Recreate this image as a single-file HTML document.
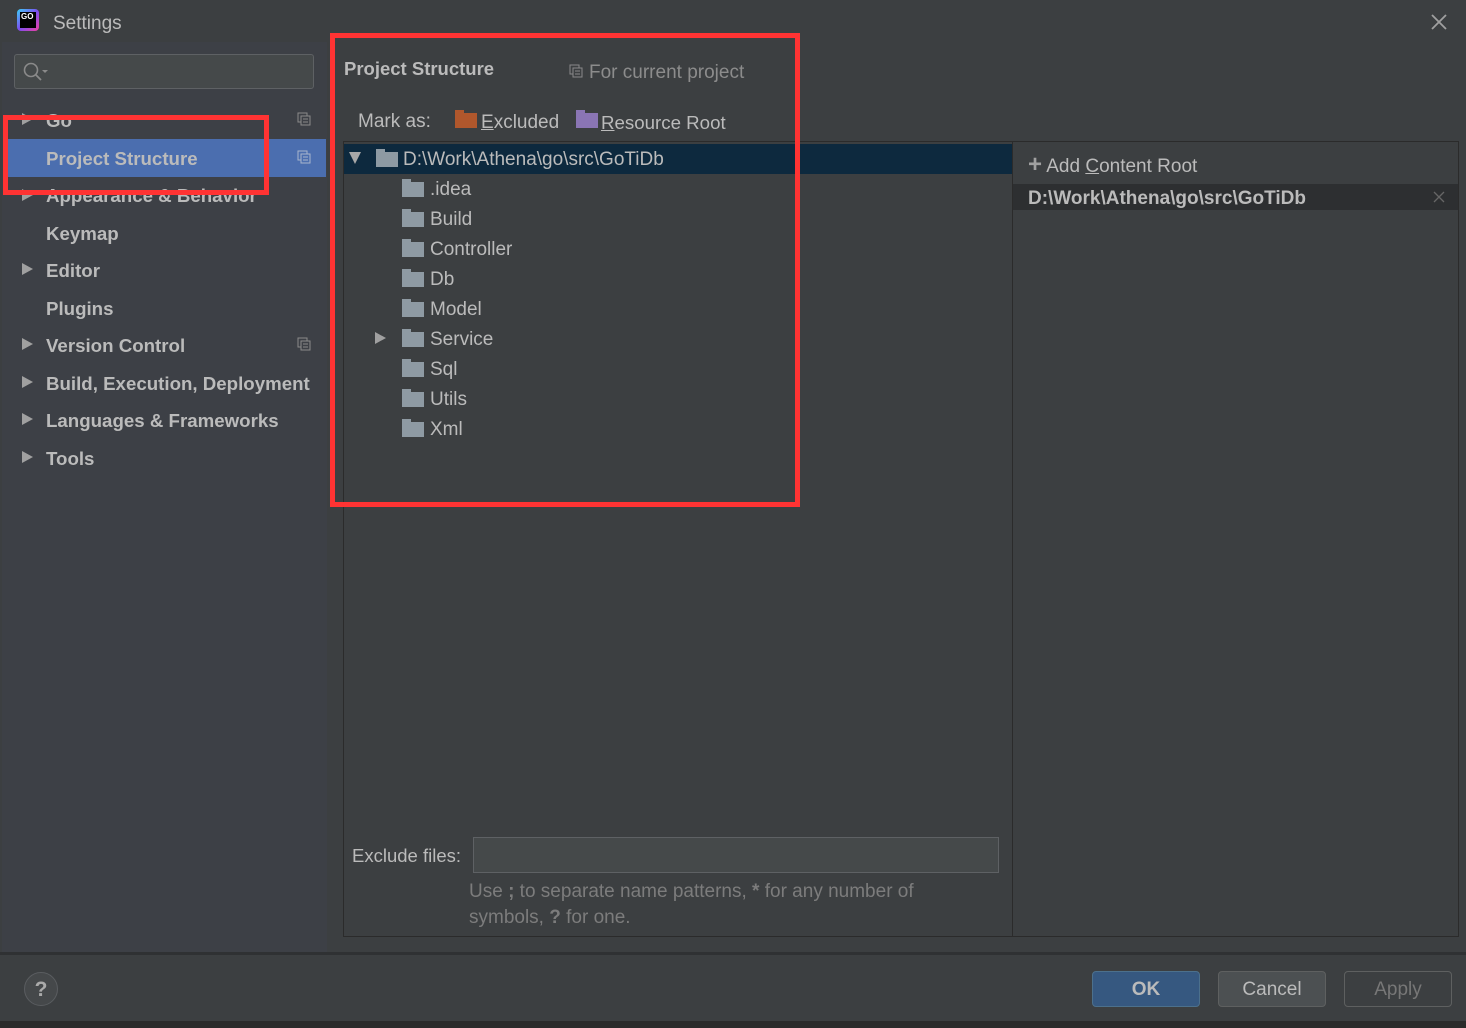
<!DOCTYPE html>
<html><head><meta charset="utf-8"><style>
*{margin:0;padding:0;box-sizing:border-box}
body{width:1466px;height:1028px;background:#3c3f41;font-family:"Liberation Sans",sans-serif;color:#bbbbbb;position:relative;overflow:hidden}
.a{position:absolute;white-space:nowrap}
.t{transform:translateY(2px)}
.side{position:absolute;left:2px;top:42px;width:325px;height:911px;background:#3d4046}
.si{position:absolute;left:46px;font-size:18.7px;font-weight:bold;color:#bbbbbb;transform:translateY(2px);white-space:nowrap}
.tri{position:absolute;left:22px;width:0;height:0;border-left:11px solid #a0a0a0;border-top:6px solid transparent;border-bottom:6px solid transparent}
.cp{position:absolute;left:297px;width:14px;height:14px}
.fold{position:absolute;width:22px;height:15px;background:#8e9aa3}
.fold:before{content:"";position:absolute;left:0;top:-3px;width:9px;height:4px;background:#8e9aa3}
.tn{position:absolute;font-size:19px;color:#bbbbbb;transform:translateY(2px);white-space:nowrap}
.red{position:absolute;border:5px solid #ff3333}
.btn{position:absolute;top:971px;height:36px;border-radius:4px;font-size:19px;text-align:center;line-height:36px}
</style></head><body>
<div class="a" style="left:17px;top:9px;width:22px;height:22px;border-radius:4px;background:linear-gradient(135deg,#3bd1f7,#7b4ef0,#f03fa0)"></div>
<div class="a" style="left:20px;top:12px;width:16px;height:16px;background:#000;color:#fff;font-size:8px;font-weight:bold;line-height:10px;padding-left:1px">GO</div>
<div class="a t" style="left:53px;top:11px;font-size:19px;color:#bbbbbb">Settings</div>
<svg class="a" style="left:1430px;top:13px" width="18" height="18"><path d="M2 2L16 16M16 2L2 16" stroke="#a0a0a0" stroke-width="1.8"/></svg>

<div class="side"></div>
<div class="a" style="left:14px;top:54px;width:300px;height:35px;border:1px solid #5e6164;border-radius:3px;background:#45494a"></div>
<svg class="a" style="left:22px;top:61px" width="28" height="22"><circle cx="9" cy="9" r="6.5" stroke="#8a8a8a" stroke-width="1.6" fill="none"/><path d="M14 14L19 19" stroke="#8a8a8a" stroke-width="1.8"/><path d="M20 9L26 9L23 12Z" fill="#8a8a8a"/></svg>

<div class="tri" style="top:113px"></div><div class="si" style="top:108px">Go</div>
<div class="a" style="left:8px;top:139px;width:318px;height:38px;background:#4b6eaf"></div>
<div class="si" style="top:146px">Project Structure</div>
<div class="tri" style="top:189px"></div><div class="si" style="top:183px">Appearance &amp; Behavior</div>
<div class="si" style="top:221px">Keymap</div>
<div class="tri" style="top:263px"></div><div class="si" style="top:258px">Editor</div>
<div class="si" style="top:296px">Plugins</div>
<div class="tri" style="top:338px"></div><div class="si" style="top:333px">Version Control</div>
<div class="tri" style="top:376px"></div><div class="si" style="top:371px">Build, Execution, Deployment</div>
<div class="tri" style="top:413px"></div><div class="si" style="top:408px">Languages &amp; Frameworks</div>
<div class="tri" style="top:451px"></div><div class="si" style="top:446px">Tools</div>
<svg class="cp" style="top:112px"><rect x="1" y="1" width="9" height="9" fill="none" stroke="#8a8a8a"/><rect x="4" y="4" width="9" height="9" fill="#3d4046" stroke="#8a8a8a"/><path d="M6 7H11M6 10H11" stroke="#8a8a8a"/></svg>
<svg class="cp" style="top:150px"><rect x="1" y="1" width="9" height="9" fill="none" stroke="#a8b5cc"/><rect x="4" y="4" width="9" height="9" fill="#4b6eaf" stroke="#a8b5cc"/><path d="M6 7H11M6 10H11" stroke="#a8b5cc"/></svg>
<svg class="cp" style="top:337px"><rect x="1" y="1" width="9" height="9" fill="none" stroke="#8a8a8a"/><rect x="4" y="4" width="9" height="9" fill="#3d4046" stroke="#8a8a8a"/><path d="M6 7H11M6 10H11" stroke="#8a8a8a"/></svg>

<div class="a t" style="left:344px;top:56px;font-size:18.5px;font-weight:bold">Project Structure</div>
<svg class="a" style="left:569px;top:64px" width="14" height="14"><rect x="1" y="1" width="9" height="9" fill="none" stroke="#8a8a8a"/><rect x="4" y="4" width="9" height="9" fill="#3c3f41" stroke="#8a8a8a"/><path d="M6 7H11M6 10H11" stroke="#8a8a8a"/></svg>
<div class="a t" style="left:589px;top:60px;font-size:19px;color:#8c8c8c">For current project</div>
<div class="a t" style="left:358px;top:109px;font-size:19px">Mark as:</div>
<div class="fold" style="left:455px;top:113px;background:#b0572c"></div>
<div class="a" style="left:455px;top:110px;width:9px;height:4px;background:#b0572c"></div>
<div class="a t" style="left:481px;top:110px;font-size:19px"><u>E</u>xcluded</div>
<div class="fold" style="left:576px;top:113px;background:#8a75b4"></div>
<div class="a" style="left:576px;top:110px;width:9px;height:4px;background:#8a75b4"></div>
<div class="a t" style="left:601px;top:110px;font-size:18.7px"><u>R</u>esource Root</div>

<div class="a" style="left:343px;top:141px;width:670px;height:796px;border:1px solid #2b2b2b;background:#3c3f41"></div>
<div class="a" style="left:1012px;top:141px;width:447px;height:796px;border:1px solid #2b2b2b;background:#3c3f41"></div>
<div class="a" style="left:344px;top:144px;width:668px;height:30px;background:#0d293e"></div>
<div class="a" style="left:349px;top:152px;width:0;height:0;border-top:12px solid #a8a8a8;border-left:6px solid transparent;border-right:6px solid transparent"></div>
<div class="fold" style="left:376px;top:152px"></div>
<div class="tn" style="left:403px;top:147px">D:\Work\Athena\go\src\GoTiDb</div>
<div class="fold" style="left:402px;top:182px"></div><div class="tn" style="left:430px;top:177px">.idea</div>
<div class="fold" style="left:402px;top:212px"></div><div class="tn" style="left:430px;top:207px">Build</div>
<div class="fold" style="left:402px;top:242px"></div><div class="tn" style="left:430px;top:237px">Controller</div>
<div class="fold" style="left:402px;top:272px"></div><div class="tn" style="left:430px;top:267px">Db</div>
<div class="fold" style="left:402px;top:302px"></div><div class="tn" style="left:430px;top:297px">Model</div>
<div class="a" style="left:375px;top:332px;width:0;height:0;border-left:11px solid #a0a0a0;border-top:6px solid transparent;border-bottom:6px solid transparent"></div>
<div class="fold" style="left:402px;top:332px"></div><div class="tn" style="left:430px;top:327px">Service</div>
<div class="fold" style="left:402px;top:362px"></div><div class="tn" style="left:430px;top:357px">Sql</div>
<div class="fold" style="left:402px;top:392px"></div><div class="tn" style="left:430px;top:387px">Utils</div>
<div class="fold" style="left:402px;top:422px"></div><div class="tn" style="left:430px;top:417px">Xml</div>

<div class="a t" style="left:352px;top:843px;font-size:18.5px">Exclude files:</div>
<div class="a" style="left:473px;top:837px;width:526px;height:36px;border:1px solid #5e6164;background:#45494a"></div>
<div class="a t" style="left:469px;top:879px;font-size:19px;color:#7c7c7c">Use <b>;</b> to separate name patterns, <b>*</b> for any number of</div>
<div class="a t" style="left:469px;top:905px;font-size:19px;color:#7c7c7c">symbols, <b>?</b> for one.</div>

<div class="a t" style="left:1028px;top:153px;font-size:19px"><span style="font-size:24px;line-height:19px;font-weight:bold;color:#a0a0a0">+</span> Add <u>C</u>ontent Root</div>
<div class="a" style="left:1013px;top:184px;width:445px;height:26px;background:#2d2f31"></div>
<div class="a t" style="left:1028px;top:186px;font-size:19px;font-weight:bold">D:\Work\Athena\go\src\GoTiDb</div>
<svg class="a" style="left:1433px;top:191px" width="12" height="12"><path d="M1 1L11 11M11 1L1 11" stroke="#666" stroke-width="1.3"/></svg>

<div class="red" style="left:3px;top:115px;width:266px;height:80px"></div>
<div class="red" style="left:330px;top:33px;width:470px;height:474px"></div>

<div class="a" style="left:0;top:952px;width:1466px;height:3px;background:#2f3133"></div>
<div class="a" style="left:24px;top:972px;width:34px;height:34px;border-radius:50%;border:1px solid #5a5d60;background:#45484a;color:#aaa;font-size:21px;font-weight:bold;text-align:center;line-height:34px">?</div>
<div class="btn" style="left:1092px;width:108px;background:#365880;border:1px solid #4c708c;color:#bbb;font-weight:bold">OK</div>
<div class="btn" style="left:1218px;width:108px;background:#4c5052;border:1px solid #5e6060">Cancel</div>
<div class="btn" style="left:1344px;width:108px;background:#3c3f41;border:1px solid #5e6060;color:#777">Apply</div>
<div class="a" style="left:0;top:1021px;width:1466px;height:7px;background:#2b2b2b"></div>
</body></html>
